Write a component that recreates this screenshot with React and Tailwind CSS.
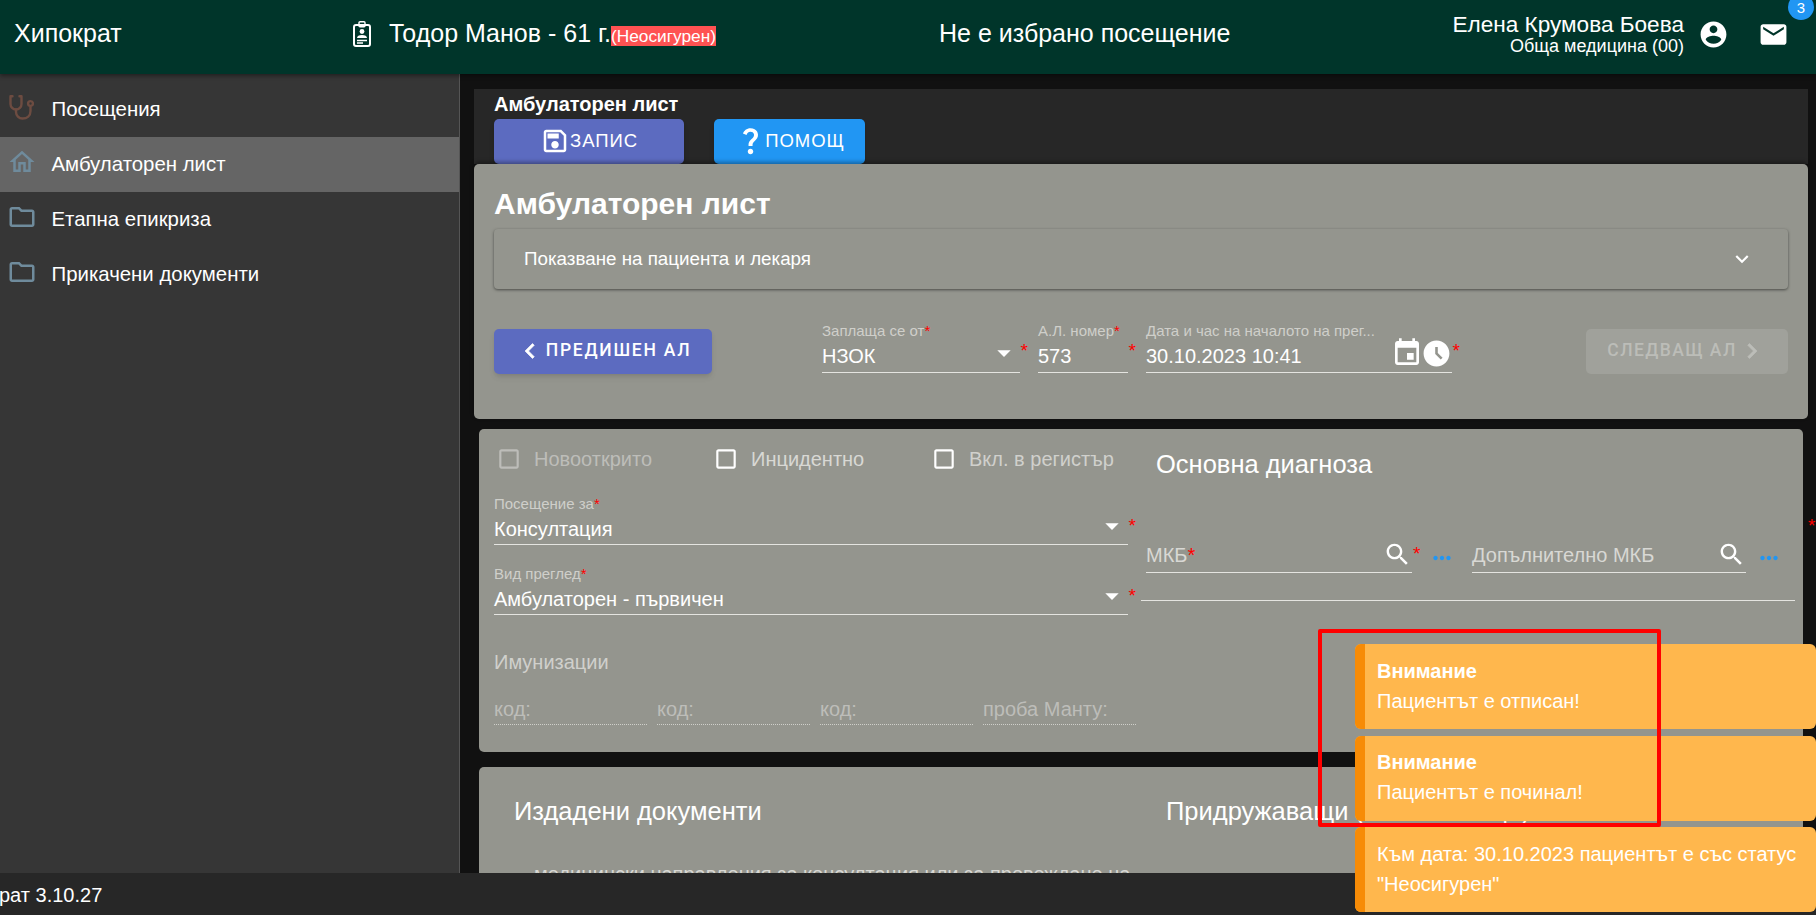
import React from 'react'

const PATHS = {
  account: 'M12 2C6.48 2 2 6.48 2 12s4.48 10 10 10 10-4.48 10-10S17.52 2 12 2zm0 3c1.66 0 3 1.34 3 3s-1.34 3-3 3-3-1.34-3-3 1.34-3 3-3zm0 14.2c-2.5 0-4.71-1.28-6-3.22.03-1.99 4-3.08 6-3.08 1.99 0 5.97 1.09 6 3.08-1.29 1.94-3.5 3.22-6 3.22z',
  mail: 'M20 4H4c-1.1 0-1.99.9-1.99 2L2 18c0 1.1.9 2 2 2h16c1.1 0 2-.9 2-2V6c0-1.1-.9-2-2-2zm0 4l-8 5-8-5V6l8 5 8-5v2z',
  save: 'M17 3H5c-1.11 0-2 .9-2 2v14c0 1.1.89 2 2 2h14c1.1 0 2-.9 2-2V7l-4-4zm2 16H5V5h11.17L19 7.83V19zm-7-7c-1.66 0-3 1.34-3 3s1.34 3 3 3 3-1.34 3-3-1.34-3-3-3zM6 6h9v4H6z',
  question: 'M11.07 12.85c.77-1.39 2.25-2.21 3.11-3.44.91-1.29.4-3.7-2.18-3.7-1.69 0-2.52 1.28-2.87 2.34L6.54 6.96C7.25 4.83 9.18 3 11.99 3c2.35 0 3.96 1.07 4.78 2.41.7 1.15 1.11 3.3.03 4.9-1.2 1.77-2.35 2.31-2.97 3.45-.25.46-.35.76-.35 2.24h-2.89c-.01-.78-.13-2.05.48-3.15zM14 20c0 1.1-.9 2-2 2s-2-.9-2-2 .9-2 2-2 2 .9 2 2z',
  calendar: 'M17 12h-5v5h5v-5zM16 1v2H8V1H6v2H5c-1.11 0-1.99.9-1.99 2L3 19c0 1.1.89 2 2 2h14c1.1 0 2-.9 2-2V5c0-1.1-.9-2-2-2h-1V1h-2zm3 18H5V8h14v11z',
  clock: 'M11.99 2C6.47 2 2 6.48 2 12s4.47 10 9.99 10C17.52 22 22 17.52 22 12S17.52 2 11.99 2zm3.3 14.71L11 12.41V7h2v4.59l3.71 3.71-1.42 1.41z',
  search: 'M15.5 14h-.79l-.28-.27C15.41 12.59 16 11.11 16 9.5 16 5.91 13.09 3 9.5 3S3 5.91 3 9.5 5.91 16 9.5 16c1.61 0 3.09-.59 4.23-1.57l.27.28v.79l5 4.99L20.49 19l-4.99-5zm-6 0C7.01 14 5 11.99 5 9.5S7.01 5 9.5 5 14 7.01 14 9.5 11.99 14 9.5 14z',
  dots: 'M6 10c-1.1 0-2 .9-2 2s.9 2 2 2 2-.9 2-2-.9-2-2-2zm12 0c-1.1 0-2 .9-2 2s.9 2 2 2 2-.9 2-2-.9-2-2-2zm-6 0c-1.1 0-2 .9-2 2s.9 2 2 2 2-.9 2-2-.9-2-2-2z',
  expand: 'M7.41 8.59L12 13.17l4.59-4.58L18 10l-6 6-6-6 1.41-1.41z',
  left: 'M15.41 7.41L14 6l-6 6 6 6 1.41-1.41L10.83 12z',
  right: 'M10 6L8.59 7.41 13.17 12l-4.58 4.59L10 18l6-6z',
  drop: 'M7 10l5 5 5-5z',
  checkbox: 'M19 5v14H5V5h14m0-2H5c-1.1 0-2 .9-2 2v14c0 1.1.9 2 2 2h14c1.1 0 2-.9 2-2V5c0-1.1-.9-2-2-2z',
  home: 'M12 5.69l5 4.5V18h-2v-6H9v6H7v-7.81l5-4.5M12 3L2 12h3v8h6v-6h2v6h6v-8h3L12 3z',
  folder: 'M9.17 6l2 2H20v10H4V6h5.17M10 4H4c-1.1 0-1.99.9-1.99 2L2 18c0 1.1.9 2 2 2h16c1.1 0 2-.9 2-2V8c0-1.1-.9-2-2-2h-8l-2-2z',
}

const Icon = ({ name, className }) => (
  <svg viewBox="0 0 24 24" fill="currentColor" className={className}>
    <path d={PATHS[name]} />
  </svg>
)

const Stethoscope = () => (
  <svg viewBox="0 0 25 25" fill="none" stroke="currentColor" strokeWidth="2.4" strokeLinecap="round" strokeLinejoin="round" className="w-[25px] h-[25px] shrink-0 ml-[2.5px] mr-[2.5px] -mt-[5px] text-[#6d4c41]">
    <path d="M3.5 1.2H1.5v7.8a5.5 5.5 0 0 0 11 0V1.2h-2" />
    <path d="M7 14.5v2.5a6.5 6.5 0 0 0 6.5 6.5c4.5 0 8-2.5 8-7.5v-4" />
    <circle cx="21.5" cy="8.5" r="2.4" />
  </svg>
)

const BadgeIcon = () => (
  <svg viewBox="0 0 18 26" fill="none" className="w-[18px] h-[26px] shrink-0 text-white">
    <rect x="1" y="4" width="16" height="21" rx="2" stroke="currentColor" strokeWidth="2" />
    <rect x="6" y="0.7" width="6" height="5" rx="1" stroke="currentColor" strokeWidth="1.4" />
    <circle cx="9" cy="10.5" r="2.4" fill="currentColor" />
    <path d="M4 17c0-2 2-3 5-3s5 1 5 3z" fill="currentColor" />
    <path d="M4 19.5h10M4 22h6" stroke="currentColor" strokeWidth="1.5" />
  </svg>
)

const Req = ({ className }) => (
  <span className={`absolute text-[#ff0000] text-[19px] leading-none ${className}`}>*</span>
)

const NavItem = ({ label, active, icon }) => (
  <div className={`flex items-center h-[55px] pl-[6.5px] ${active ? 'bg-[#656565]' : ''}`}>
    {icon}
    <span className="ml-[15px] text-[20.4px] text-white">{label}</span>
  </div>
)

const FieldLabel = ({ children, required }) => (
  <div className="h-[18px] mt-[1px] text-[15px] leading-[18px] text-[#cfcfca] whitespace-nowrap">
    {children}
    {required && <span className="text-[#ff0000]">*</span>}
  </div>
)

const Field = ({ label, value, width, className = '', children }) => (
  <div className={`relative -mt-[8px] ${width} ${className}`}>
    <FieldLabel required={label !== 'Дата и час на началото на прег...'}>{label}</FieldLabel>
    <div className="flex items-center h-[33px] border-b border-[#e4e4e0] text-[20px] text-white">
      <span className="flex-1">{value}</span>
      {children}
    </div>
  </div>
)

const Check = ({ label, disabled, labelColor, className }) => (
  <div className={`flex items-center ${className}`}>
    <Icon name="checkbox" className={`w-[26px] h-[26px] -ml-[3px] ${disabled ? 'text-[#bdbdb9]' : 'text-white'}`} />
    <span className={`ml-[12px] text-[20px] whitespace-nowrap ${labelColor}`}>{label}</span>
  </div>
)

const SelectField = ({ label, value, className }) => (
  <div className={`relative ${className}`}>
    <div className="h-[20px] text-[15px] leading-[20px] text-[#cfcfca]">
      {label}
      <span className="text-[#ff0000]">*</span>
    </div>
    <div className="flex items-center justify-between h-[31px] border-b border-[#e4e4e0] text-[20px] text-white">
      <span>{value}</span>
      <Icon name="drop" className="w-[32px] h-[32px] -mt-[6px]" />
    </div>
    <Req className="-right-[8px] top-[22px]" />
  </div>
)

const SearchField = ({ label, width, required, className = '' }) => (
  <div className={`relative flex items-center h-[32px] border-b border-[#e4e4e0] ${width} ${className}`}>
    <span className="flex-1 -mt-[3px] text-[20px] text-[#d8d8d4] whitespace-nowrap">
      {label}
      {required && <span className="text-[#ff0000]">*</span>}
    </span>
    <Icon name="search" className="w-[29px] h-[29px] -mt-[5px] text-white" />
  </div>
)

const Dots = ({ className }) => <Icon name="dots" className={`w-[26px] h-[26px] text-[#2196f3] ${className}`} />

const CodeField = ({ label, width }) => (
  <div className={`flex items-center h-[30px] pb-[2px] border-b border-dotted border-[#cfcfca] text-[20px] text-[#bdbdb9] ${width}`}>
    {label}
  </div>
)

const Toast = ({ title, lines }) => (
  <div className="flex h-[85px] rounded-[6px] overflow-hidden bg-[#ffb74d] text-white">
    <div className="w-[10px] bg-[#f78b06] shrink-0" />
    <div className="flex flex-col justify-center pl-[12px] pb-[2px] text-[20px] leading-[30px]">
      {title && <div className="font-bold">{title}</div>}
      {lines.map((l) => (
        <div key={l} className="whitespace-nowrap">{l}</div>
      ))}
    </div>
  </div>
)

export default function App() {
  return (
    <div className="relative flex flex-col w-[1816px] h-[915px] overflow-hidden bg-[#111111] font-['Liberation_Sans',Arial,sans-serif]">
      {/* Header */}
      <header className="flex items-center h-[74px] pb-[6px] shrink-0 bg-[#00352a] text-white text-[25px] shadow-[0_2px_4px_rgba(0,0,0,0.4)] z-10">
        <div className="w-[353px] pl-[14px]">Хипократ</div>
        <div className="flex items-center w-[586px]">
          <BadgeIcon />
          <span className="ml-[18px]">Тодор Манов - 61 г.</span>
          <span className="mt-[4px] bg-[#ff5252] text-[17.3px] leading-[20px]">(Неосигурен)</span>
        </div>
        <div className="flex-1">Не е избрано посещение</div>
        <div className="flex flex-col items-end -mt-[1px]">
          <span className="text-[22.6px] leading-[24px]">Елена Крумова Боева</span>
          <span className="text-[18px] leading-[18px]">Обща медицина (00)</span>
        </div>
        <Icon name="account" className="w-[31px] h-[31px] ml-[14px]" />
        <div className="relative ml-[29px] mr-[27px]">
          <Icon name="mail" className="w-[31px] h-[31px]" />
          <span className="absolute -top-[25px] left-[30px] flex items-center justify-center w-[26px] h-[26px] rounded-full bg-[#2196f3] text-[15px] pt-[3px]">3</span>
        </div>
      </header>

      <div className="flex flex-1 min-h-0">
        {/* Sidebar */}
        <aside className="w-[460px] shrink-0 pt-[8px] bg-[#363636] border-r border-[#555555]">
          <NavItem label="Посещения" icon={<Stethoscope />} />
          <NavItem label="Амбулаторен лист" active icon={<Icon name="home" className="w-[30px] h-[30px] -mt-[5px] shrink-0 text-[#6f8b9c]" />} />
          <NavItem label="Етапна епикриза" icon={<Icon name="folder" className="w-[30px] h-[30px] -mt-[5px] shrink-0 text-[#6f8b9c]" />} />
          <NavItem label="Прикачени документи" icon={<Icon name="folder" className="w-[30px] h-[30px] -mt-[5px] shrink-0 text-[#6f8b9c]" />} />
        </aside>

        {/* Main */}
        <main className="flex-1 min-w-0 overflow-hidden pt-[15px] pl-[14px] pr-[8px]">
          <div className="h-[75px] pl-[20px] bg-[#272727]">
            <div className="h-[30px] text-[20px] leading-[30px] font-bold text-white">Амбулаторен лист</div>
            <div className="flex gap-[30px]">
              <button className="flex items-center justify-center w-[190px] h-[45px] pb-[2px] rounded-[5px] bg-[#5c6bc0] text-white text-[18.5px] tracking-[0.05em] shadow-md">
                <Icon name="save" className="w-[30px] h-[30px]" />
                ЗАПИС
              </button>
              <button className="flex items-center justify-center w-[151px] h-[45px] pb-[2px] rounded-[5px] bg-[#2196f3] text-white text-[18.5px] tracking-[0.05em] shadow-md">
                <Icon name="question" className="w-[33px] h-[33px] -mr-[2px]" />
                ПОМОЩ
              </button>
            </div>
          </div>

          <section className="relative h-[255px] px-[20px] bg-[#94958e] rounded-[5px] shadow-[0_-2px_4px_rgba(0,0,0,0.35)]">
            <h1 className="pt-[21px] h-[65px] text-[30px] leading-[38px] font-bold text-white">Амбулаторен лист</h1>
            <div className="flex items-center justify-between h-[60px] pl-[30px] pr-[33px] rounded-[4px] text-[18.8px] text-white shadow-[0_1px_3px_rgba(0,0,0,0.5)]">
              <span>Показване на пациента и лекаря</span>
              <Icon name="expand" className="w-[26px] h-[26px]" />
            </div>
            <div className="flex items-start mt-[40px]">
              <button className="flex items-center justify-center w-[218px] h-[45px] pb-[2px] rounded-[5px] bg-[#5c6bc0] text-white font-['Roboto',sans-serif] text-[17.5px] font-medium tracking-[0.1em] shadow-md">
                <Icon name="left" className="w-[30px] h-[30px] mr-[1px] stroke-current stroke-[0.5]" />
                ПРЕДИШЕН АЛ
              </button>
              <Field label="Заплаща се от" value="НЗОК" width="w-[198px]" className="ml-[110px]">
                <Icon name="drop" className="w-[32px] h-[32px] -mt-[6px]" />
                <Req className="-right-[8px] top-[20px]" />
              </Field>
              <Field label="А.Л. номер" value="573" width="w-[90px]" className="ml-[18px]">
                <Req className="-right-[8px] top-[20px]" />
              </Field>
              <Field label="Дата и час на началото на прег..." value="30.10.2023 10:41" width="w-[306px]" className="ml-[18px]">
                <Icon name="calendar" className="w-[32px] h-[32px] -mt-[6px]" />
                <Icon name="clock" className="w-[31px] h-[31px] -ml-[2px] -mt-[5px]" />
                <Req className="-right-[8px] top-[20px]" />
              </Field>
              <button className="flex items-center justify-center w-[202px] h-[45px] pb-[2px] ml-[134px] rounded-[5px] bg-[#a0a19b] text-[#bcbdb8] font-['Roboto',sans-serif] text-[17.5px] font-medium tracking-[0.08em]">
                СЛЕДВАЩ АЛ
                <Icon name="right" className="w-[30px] h-[30px] stroke-current stroke-[0.5]" />
              </button>
            </div>
          </section>

          <section className="flex h-[323px] mt-[10px] mx-[5px] pl-[15px] bg-[#94958e] rounded-[5px]">
            <div className="w-[634px] shrink-0">
              <div className="flex items-center h-[30px] mt-[15px]">
                <Check label="Новооткрито" disabled labelColor="text-[#bdbdb9]" className="w-[222px] pl-[5px]" />
                <Check label="Инцидентно" labelColor="text-[#d8d8d4]" className="w-[218px]" />
                <Check label="Вкл. в регистър" labelColor="text-[#d0d0cc]" />
              </div>
              <SelectField label="Посещение за" value="Консултация" className="mt-[20px]" />
              <SelectField label="Вид преглед" value="Амбулаторен - първичен" className="mt-[19px]" />
              <div className="mt-[35px] text-[20px] leading-[24px] text-[#d0d0cc]">Имунизации</div>
              <div className="flex gap-[10px] mt-[21px] w-[642px]">
                <CodeField label="код:" width="w-[153px]" />
                <CodeField label="код:" width="w-[153px]" />
                <CodeField label="код:" width="w-[153px]" />
                <CodeField label="проба Манту:" width="w-[153px]" />
              </div>
            </div>

            <div className="relative w-[654px] shrink-0 ml-[13px]">
              <h2 className="pt-[21px] pl-[15px] text-[25.5px] leading-[28px] text-white">Основна диагноза</h2>
              <div className="flex items-end mt-[63px] pl-[5px]">
                <SearchField label="МКБ" required width="w-[266px]" />
                <span className="relative w-[9px]"><Req className="left-[1px] -top-[29px]" /></span>
                <Dots className="ml-[8px] mb-[2px] mr-[17px]" />
                <SearchField label="Допълнително МКБ" width="w-[274px]" />
                <Dots className="ml-[10px] mb-[2px]" />
              </div>
              <div className="mt-[27px] border-b border-[#e4e4e0]" />
            </div>
          </section>

          <section className="h-[300px] mt-[15px] mx-[5px] pl-[35px] bg-[#94958e] rounded-[5px]">
            <div className="flex pt-[30px]">
              <h2 className="w-[652px] text-[25.5px] leading-[28px] text-white">Издадени документи</h2>
              <h2 className="text-[25.5px] leading-[28px] text-white whitespace-nowrap">Придружаващи (съпътстващи) заболявания</h2>
            </div>
            <div className="mt-[37px] pl-[20px] text-[20px] leading-[24px] text-[#d8d8d4]">
              медицински направления за консултация или за провеждане на
            </div>
          </section>
        </main>
      </div>

      {/* Footer */}
      <footer className="flex items-center h-[42px] pt-[2px] -ml-[1px] shrink-0 bg-[#272727] text-white text-[20px]">рат 3.10.27</footer>

      {/* Stray required mark right of the diagnosis card */}
      <Req className="left-[1808px] top-[516px]" />

      {/* Toasts */}
      <div className="absolute left-[1355px] top-[644px] w-[461px] flex flex-col gap-[6.5px]">
        <Toast title="Внимание" lines={['Пациентът е отписан!']} />
        <Toast title="Внимание" lines={['Пациентът е починал!']} />
        <Toast lines={['Към дата: 30.10.2023 пациентът е със статус', '"Неосигурен"']} />
      </div>

      {/* Red annotation rectangle */}
      <div className="absolute left-[1318px] top-[629px] w-[343px] h-[198px] border-[4px] border-[#ff0000] rounded-[2px]" />
    </div>
  )
}
